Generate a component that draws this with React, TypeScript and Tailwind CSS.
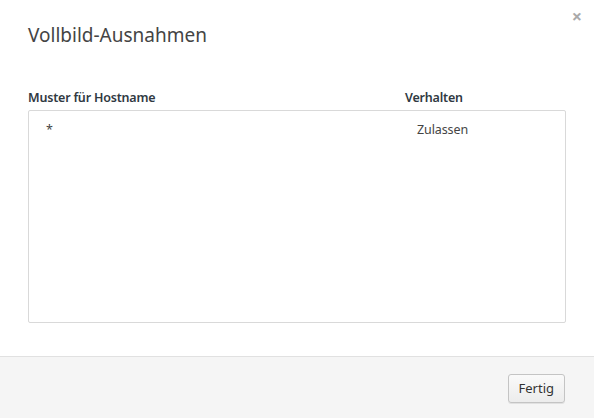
import React from 'react';

const rules = [{ pattern: '*', setting: 'Zulassen' }];

export default function App() {
  return (
    <div
      className="relative flex h-[418px] w-[594px] flex-col bg-white text-[12.5px] text-[#333]"
      style={{ fontFamily: '"Noto Sans", "Open Sans", sans-serif' }}
    >
      {/* close button */}
      <button className="absolute right-[12px] top-[7px] text-[18px] font-bold leading-none text-[#aaa]">
        ×
      </button>

      <div className="flex-1 px-[28px]">
        <h1 className="pt-[22px] text-[19px] font-normal leading-[26px] text-[#444]">Vollbild-Ausnahmen</h1>

        <div className="mt-[41px] flex font-semibold leading-[18px] text-[#303942]">
          <span className="w-[377px] tracking-[-0.2px]">Muster für Hostname</span>
          <span className="tracking-[-0.2px]">Verhalten</span>
        </div>

        <div className="mt-[3px] h-[213px] rounded-[2px] border border-[#d9d9d9] pt-[9px]">
          {rules.map(r => (
            <div key={r.pattern} className="flex h-[20px] items-center text-[#444]">
              <span className="w-[388px] pl-[17px]">{r.pattern}</span>
              <span className="tracking-[-0.1px]">{r.setting}</span>
            </div>
          ))}
        </div>
      </div>

      <div className="flex h-[62px] items-center justify-end border-t border-[#e1e1e1] bg-[#f5f5f5] px-[29px] pt-[2px]">
        <button className="h-[29px] rounded-[3px] border border-[#c4c4c4] bg-gradient-to-b from-[#fafafa] to-[#ececec] px-[10px] text-[13px] text-[#333] shadow-[0_1px_0_rgba(0,0,0,0.08)]">
          Fertig
        </button>
      </div>
    </div>
  );
}
